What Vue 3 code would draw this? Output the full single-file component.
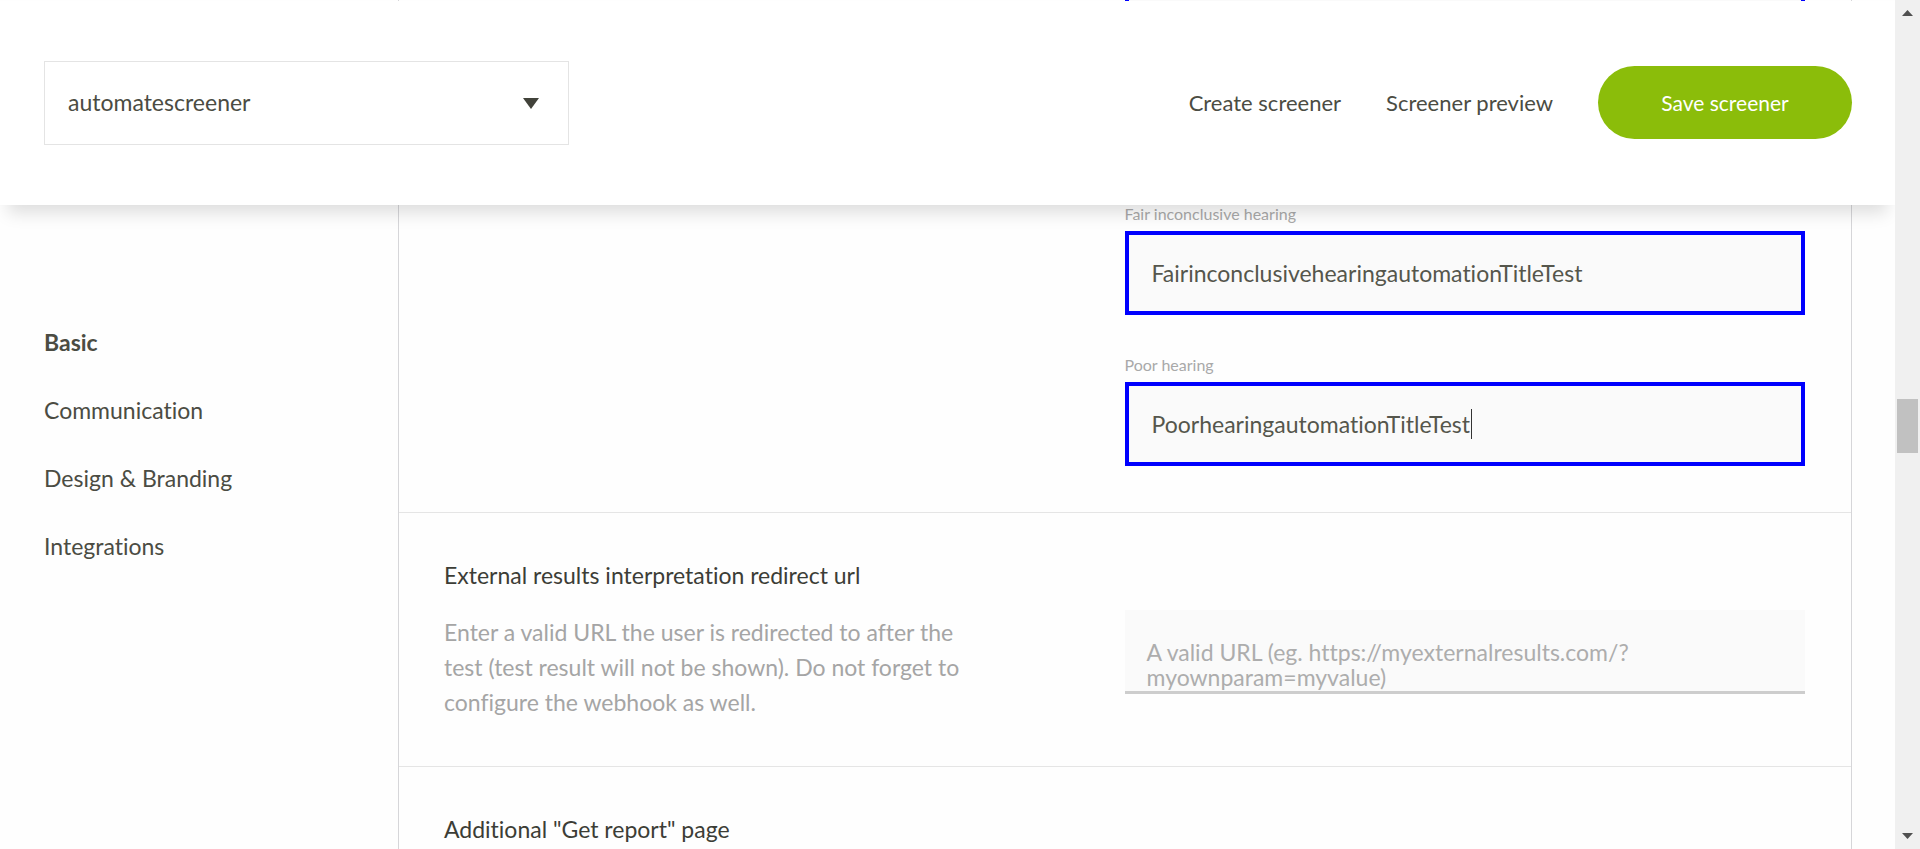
<script setup>
import { ref } from 'vue'

const screener = ref('automatescreener')
const fairTitle = ref('FairinconclusivehearingautomationTitleTest')
const poorTitle = ref('PoorhearingautomationTitleTest')
const redirectUrl = ref('')
const navItems = ['Basic', 'Communication', 'Design & Branding', 'Integrations']
</script>

<template>
  <div class="window">
    <div class="viewport">
      <header class="topbar">
        <div class="picker">
          <select v-model="screener" class="picker-select" aria-label="Screener">
            <option>automatescreener</option>
          </select>
          <svg class="picker-arrow" width="16" height="11" viewBox="0 0 16 11" aria-hidden="true">
            <path d="M0 0H16L8 11Z" fill="#41423a" />
          </svg>
        </div>
        <div class="actions">
          <a href="#" class="action">Create screener</a>
          <a href="#" class="action">Screener preview</a>
          <button type="button" class="save">Save screener</button>
        </div>
      </header>

      <div class="body">
        <nav class="sidebar">
          <a v-for="(item, i) in navItems" :key="item" href="#" class="nav-link" :class="{ active: i === 0 }">{{ item }}</a>
        </nav>

        <main class="panel">
          <section class="section titles">
            <div class="fields">
              <div class="field-end"></div>
              <div class="field">
                <label for="fair" class="label">Fair inconclusive hearing</label>
                <input id="fair" v-model="fairTitle" type="text" class="input" />
              </div>
              <div class="field">
                <label for="poor" class="label">Poor hearing</label>
                <input id="poor" v-model="poorTitle" type="text" class="input" />
                <span class="caret"></span>
              </div>
            </div>
          </section>

          <section class="section">
            <div>
              <h2 class="title"><label for="redirect">External results interpretation redirect url</label></h2>
              <p class="description">Enter a valid URL the user is redirected to after the test (test result will not be shown). Do not forget to configure the webhook as well.</p>
            </div>
            <textarea id="redirect" v-model="redirectUrl" class="textarea" placeholder="A valid URL (eg. https://myexternalresults.com/?myownparam=myvalue)"></textarea>
          </section>

          <section class="section">
            <h2 class="title">Additional "Get report" page</h2>
          </section>
        </main>
      </div>
    </div>

    <div class="scrollbar" aria-hidden="true">
      <svg width="11" height="6" viewBox="0 0 11 6"><path d="M5.500 0L11 6H0Z" fill="#505050" /></svg>
      <div class="track"><div class="thumb"></div></div>
      <svg width="11" height="6" viewBox="0 0 11 6"><path d="M0 0H11L5.500 6Z" fill="#505050" /></svg>
    </div>
  </div>
</template>

<style>
body {
  margin: 0;
  background: #fefefe;
}
</style>

<style scoped>
.window {
  display: flex;
  height: 100vh;
  overflow: hidden;
  font-family: Lato, "Open Sans", sans-serif;
  font-size: 23px;
  font-variant-ligatures: none;
  color: #4b4c43;
}

.window *,
.window *::before {
  box-sizing: border-box;
}

.viewport {
  position: relative;
  flex: 1;
  min-width: 0;
  overflow: hidden;
}

.topbar {
  position: absolute;
  z-index: 2;
  top: 1px;
  left: 0;
  right: 0;
  display: flex;
  align-items: center;
  justify-content: space-between;
  padding: 60px 43px 60px 44px;
  background: #fff;
  box-shadow: 0 16px 16px -8px rgba(0, 0, 0, 0.13);
}

.picker {
  position: relative;
  width: 525px;
}

.picker-select {
  display: block;
  width: 100%;
  height: 84px;
  padding: 0 60px 2px 23px;
  appearance: none;
  border: 1px solid #e4e4e4;
  border-radius: 0;
  background: #fff;
  font: inherit;
  font-variant-ligatures: none;
  color: inherit;
}

.picker-arrow {
  position: absolute;
  top: 37px;
  right: 30px;
  pointer-events: none;
}

.actions {
  display: flex;
  align-items: center;
  gap: 45px;
  padding-bottom: 2px;
}

.action,
.nav-link {
  color: inherit;
  text-decoration: none;
}

.action {
  font-size: 22px;
}

.save {
  width: 254px;
  height: 73px;
  border: 0;
  border-radius: 37px;
  background: #8bbd0a;
  font: inherit;
  font-size: 21px;
  color: #fff;
}

.body {
  display: flex;
  height: 100%;
  padding-right: 43px;
}

.sidebar {
  display: flex;
  flex: 0 0 398px;
  flex-direction: column;
  gap: 40px;
  padding: 328px 44px 0;
  line-height: 28px;
}

.nav-link.active {
  font-weight: 700;
}

.panel {
  flex: 1;
  min-width: 0;
  border: solid #d6d6d9;
  border-width: 0 1px;
}

.section {
  display: grid;
  grid-template-columns: 1fr 1fr;
  align-items: center;
  padding: 45px 46px 46px 45px;
  border-bottom: 1px solid #e5e5e5;
}

.section:last-child {
  border-bottom: 0;
}

.titles {
  padding-top: 0;
}

.fields {
  grid-column: 2;
}

.field-end {
  height: 14px;
  margin-bottom: 189px;
  border: 4px solid #0000fe;
  border-top: 0;
  background: #fafafa;
}

.field {
  position: relative;
  margin-bottom: 39px;
}

.field:last-child {
  margin-bottom: 0;
}

.label {
  display: block;
  height: 28px;
  font-size: 16px;
  line-height: 22px;
  color: #a9a9a9;
}

.input {
  display: block;
  width: 100%;
  height: 84px;
  padding: 0 23px;
  border: 4px solid #0000fe;
  border-radius: 0;
  background: #fafafa;
  font: inherit;
  font-variant-ligatures: none;
  color: #55564c;
}

.caret {
  position: absolute;
  top: 55px;
  left: 346px;
  width: 1px;
  height: 30px;
  background: #333;
}

.title {
  margin: 0;
  font-size: 23px;
  font-weight: 400;
  line-height: 35px;
  color: #3c3d36;
}

.description {
  max-width: 540px;
  margin: 22px 0 0;
  line-height: 35px;
  color: #a5a5a5;
}

.textarea {
  display: block;
  width: 100%;
  height: 84px;
  margin-top: 26px;
  padding: 30px 22px 0;
  overflow: hidden;
  resize: none;
  border: 0;
  border-bottom: 3px solid #cdcdcd;
  border-radius: 0;
  background: #fafafa;
  font: inherit;
  font-variant-ligatures: none;
  line-height: 25px;
}

.textarea::placeholder {
  color: #adadad;
  opacity: 1;
}

.scrollbar {
  display: flex;
  flex: 0 0 25px;
  flex-direction: column;
  align-items: center;
  padding: 10px 2px;
  background: #f0f0f0;
}

.scrollbar svg {
  display: block;
}

.track {
  flex: 1;
  width: 100%;
  padding-top: 383px;
}

.thumb {
  height: 54px;
  background: #c1c1c1;
}
</style>
